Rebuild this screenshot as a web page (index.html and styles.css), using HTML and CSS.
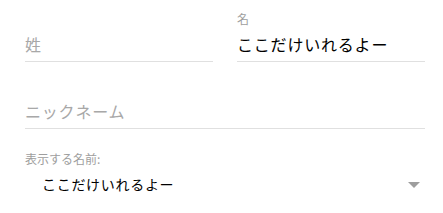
FILE: index.html
```html
<!DOCTYPE html>
<html lang="ja">
<head>
<meta charset="utf-8">
<link rel="stylesheet" href="styles.css">
</head>
<body>
<form class="form">
  <div class="row two">
    <div class="field">
      <span class="label"></span>
      <input class="input" type="text" placeholder="姓">
    </div>
    <div class="field">
      <label class="label">名</label>
      <input class="input" type="text" value="ここだけいれるよー">
    </div>
  </div>
  <div class="field nick">
    <input class="input" type="text" placeholder="ニックネーム">
  </div>
  <div class="field select-field">
    <label class="label">表示する名前:</label>
    <div class="select">
      <span class="select-value">ここだけいれるよー</span>
      <span class="caret"></span>
    </div>
  </div>
</form>
</body>
</html>
```
FILE: styles.css
```css
html, body {
  margin: 0;
  padding: 0;
  background: #fff;
}
body {
  font-family: "Noto Sans CJK JP", "Noto Sans", sans-serif;
  color: #000;
}
.form {
  width: 400px;
  padding: 10px 0 0 25px;
}
.row.two {
  display: grid;
  grid-template-columns: 188px 188px;
  column-gap: 24px;
}
.field {
  display: flex;
  flex-direction: column;
}
.label {
  display: block;
  height: 17px;
  font-size: 12px;
  line-height: 17px;
  color: #9e9e9e;
}
.input {
  box-sizing: border-box;
  width: 100%;
  height: 35px;
  margin: 0;
  padding: 0;
  border: none;
  border-bottom: 1px solid #e0e0e0;
  outline: none;
  background: transparent;
  font-family: "Noto Sans CJK JP", "Noto Sans", sans-serif;
  font-size: 16px;
  letter-spacing: 0.8px;
  color: #000;
}
.input::placeholder {
  color: #a8a8a8;
}
.nick {
  margin-top: 32px;
}
.select-field {
  margin-top: 21px;
}
.select {
  display: flex;
  align-items: center;
  justify-content: space-between;
  height: 34px;
  padding: 0 5px 0 17px;
}
.select-value {
  font-size: 14px;
  letter-spacing: 0.7px;
}
.caret {
  width: 0;
  height: 0;
  margin-top: 2px;
  border-left: 6px solid transparent;
  border-right: 6px solid transparent;
  border-top: 6px solid #9e9e9e;
}
```
